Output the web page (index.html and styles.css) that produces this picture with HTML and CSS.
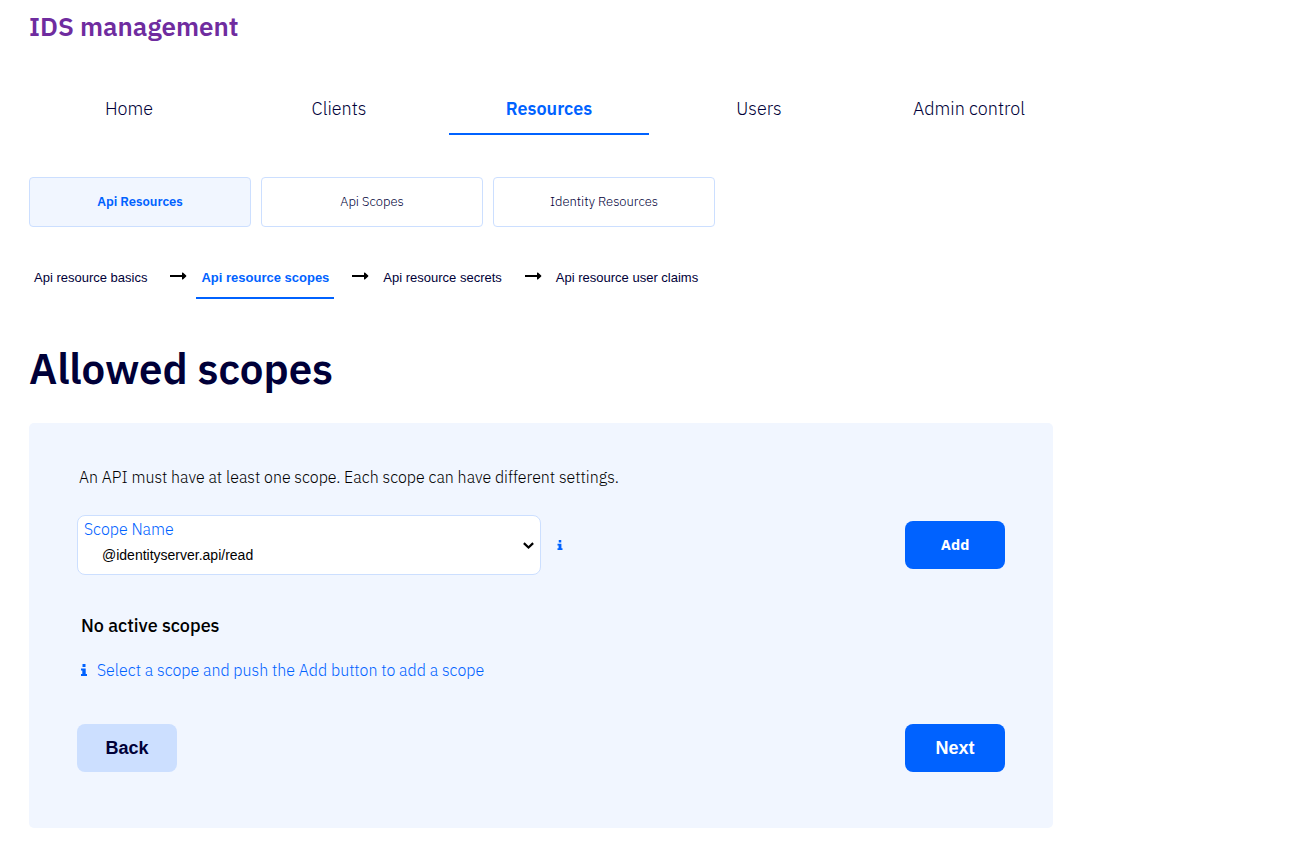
FILE: index.html
```html
<!DOCTYPE html>
<html lang="en">
<head>
<meta charset="utf-8">
<meta name="viewport" content="width=device-width, initial-scale=1">
<title>IDS management</title>
<link rel="stylesheet" href="styles.css">
</head>
<body>
<svg class="sprite" aria-hidden="true">
  <symbol id="arrow" viewBox="0 0 17 8"><path d="M0 3h12V1c0-.5.6-.7.9-.4L16.200 3.500c.2.300.2.700 0 1L12.900 7.400c-.3.300-.9.100-.9-.4V5H0z"/></symbol>
  <symbol id="info" viewBox="0 0 6 12"><path d="M1.500 0h3v3h-3zM0 4.500h4.700V10H6v2H0v-2h1.300V6.500H0z"/></symbol>
</svg>
<header class="header">
  <a class="brand" href="#">IDS management</a>
  <nav class="tabs" aria-label="Main">
    <a class="tab" href="#">Home</a>
    <a class="tab" href="#">Clients</a>
    <a class="tab tab-active" href="#" aria-current="page">Resources</a>
    <a class="tab" href="#">Users</a>
    <a class="tab" href="#">Admin control</a>
  </nav>
</header>
<main class="content">
  <nav class="subtabs" aria-label="Resources">
    <a class="subtab subtab-active" href="#">Api Resources</a>
    <a class="subtab" href="#">Api Scopes</a>
    <a class="subtab" href="#">Identity Resources</a>
  </nav>
  <nav class="steps" aria-label="Steps">
    <button class="step" type="button">Api resource basics</button>
    <svg class="arrow"><use href="#arrow"/></svg>
    <button class="step step-active" type="button" aria-current="step">Api resource scopes</button>
    <svg class="arrow"><use href="#arrow"/></svg>
    <button class="step" type="button">Api resource secrets</button>
    <svg class="arrow"><use href="#arrow"/></svg>
    <button class="step" type="button">Api resource user claims</button>
  </nav>
  <h1 class="title">Allowed scopes</h1>
  <form class="panel">
    <p class="intro">An API must have at least one scope. Each scope can have different settings.</p>
    <div class="picker">
      <div class="field">
        <select class="field-select" id="scope"><option>@identityserver.api/read</option></select>
        <label class="field-label" for="scope">Scope Name</label>
        <svg class="chevron" viewBox="0 0 10 6"><path d="M.8.800 5 4.800 9.200.8"/></svg>
      </div>
      <svg class="info info-small"><use href="#info"/></svg>
      <button class="button button-add" type="button">Add</button>
    </div>
    <h2 class="subtitle">No active scopes</h2>
    <p class="hint"><svg class="info"><use href="#info"/></svg>Select a scope and push the Add button to add a scope</p>
    <div class="actions">
      <button class="button button-back" type="button">Back</button>
      <button class="button" type="submit">Next</button>
    </div>
  </form>
</main>
</body>
</html>
```
FILE: styles.css
```css
:root {
  --blue: #0062ff;
  --navy: #000038;
  --pale: #f1f6ff;
  --line: #ccdfff;
  --sans: "IBM Plex Sans", Roboto, "Open Sans", sans-serif;
  --arial: "Liberation Sans", Arial, sans-serif;
}
* { box-sizing: border-box; }
body {
  margin: 0;
  padding: 0 29px 30px;
  background: #fff;
  color: #000;
  font: 300 16px/24px var(--sans);
}
a { color: inherit; text-decoration: none; }
button { margin: 0; border: 0; cursor: pointer; }
.sprite { display: none; }
.brand {
  display: block;
  padding-top: 10px;
  color: #6f2c9f;
  font-size: 26px;
  font-weight: 600;
  line-height: 32px;
}
.tabs {
  display: flex;
  gap: 10px;
  margin-top: 42px;
}
.tab {
  width: 200px;
  padding: 13px 0 12px;
  border-bottom: 2px solid transparent;
  color: var(--navy);
  font-size: 18px;
  text-align: center;
}
.tab-active {
  border-color: var(--blue);
  color: var(--blue);
  font-weight: 600;
}
.content { max-width: 1024px; }
.subtabs {
  display: flex;
  gap: 10px;
  margin-top: 42px;
}
.subtab {
  width: 222px;
  padding: 12px 0;
  border: 1px solid var(--line);
  border-radius: 4px;
  color: var(--navy);
  font-size: 13px;
  text-align: center;
}
.subtab-active {
  background: var(--pale);
  color: var(--blue);
  font-weight: 600;
}
.steps {
  display: flex;
  margin-top: 30px;
}
.step {
  height: 42px;
  padding: 2px 5px 0;
  border-bottom: 2px solid transparent;
  background: none;
  color: var(--navy);
  font: 400 13px/24px var(--arial);
}
.step-active {
  border-color: var(--blue);
  color: var(--blue);
  font-weight: 700;
}
.arrow {
  width: 17px;
  height: 8px;
  margin: 15px 9px 0 18px;
}
.title {
  margin: 40px 0 24px;
  color: var(--navy);
  font-size: 42px;
  font-weight: 600;
  line-height: 60px;
}
.panel {
  padding: 42px 48px 56px;
  border-radius: 5px;
  background: var(--pale);
}
.intro { margin: 0 2px 26px; }
.picker {
  display: flex;
  align-items: center;
}
.field {
  position: relative;
  flex: 0 1 464px;
}
.field-select {
  display: block;
  width: 100%;
  height: 60px;
  padding: 20px 24px 0;
  border: 1px solid var(--line);
  border-radius: 8px;
  appearance: none;
  background: #fff;
  color: #000;
  font: 400 14px/20px var(--arial);
}
.field-label {
  position: absolute;
  top: 2px;
  left: 7px;
  color: var(--blue);
}
.chevron {
  position: absolute;
  top: 27px;
  right: 7px;
  width: 11px;
  height: 7px;
  fill: none;
  stroke: #000;
  stroke-width: 2;
}
.info {
  width: 6px;
  height: 12px;
  fill: var(--blue);
}
.info-small {
  height: 10px;
  margin-left: 16px;
}
.button {
  width: 100px;
  height: 48px;
  border-radius: 8px;
  background: var(--blue);
  color: #fff;
  font: 700 18px/24px var(--arial);
}
.button-add {
  margin-left: auto;
  font-family: var(--sans);
  font-size: 15px;
}
.button-back {
  background: var(--line);
  color: var(--navy);
}
.subtitle {
  margin: 39px 4px 20px;
  font-size: 18px;
  font-weight: 500;
  line-height: 24px;
}
.hint {
  display: flex;
  align-items: center;
  gap: 10px;
  margin: 0 4px;
  color: var(--blue);
}
.actions {
  display: flex;
  justify-content: space-between;
  margin-top: 42px;
}
```
